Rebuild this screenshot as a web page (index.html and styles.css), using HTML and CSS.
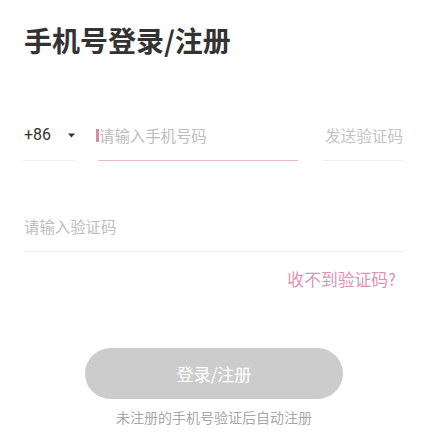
FILE: index.html
```html
<!DOCTYPE html>
<html lang="zh-CN">
<head>
<meta charset="utf-8">
<title>手机号登录/注册</title>
<link rel="stylesheet" href="styles.css">
</head>
<body>
<main class="page">
  <h1 class="title">手机号登录/注册</h1>

  <div class="phone-row">
    <div class="field country">
      <span class="code">+86</span>
      <svg class="caret" width="7" height="5" viewBox="0 0 7 5"><path d="M0 0.5 L7 0.5 L3.5 4.5 Z" fill="#333"/></svg>
    </div>
    <div class="field phone active">
      <span class="cursor"></span><span class="placeholder">请输入手机号码</span>
    </div>
    <div class="field send">发送验证码</div>
  </div>

  <div class="field code-field">
    <span class="placeholder">请输入验证码</span>
  </div>

  <div class="help-row">
    <span class="help">收不到验证码?</span>
  </div>

  <div class="btn-row">
    <button class="submit" type="button">登录/注册</button>
  </div>

  <p class="note">未注册的手机号验证后自动注册</p>
</main>
</body>
</html>
```

FILE: styles.css
```css
html, body {
  margin: 0;
  padding: 0;
  background: #ffffff;
}

body {
  font-family: "Noto Sans CJK SC", "Noto Sans", sans-serif;
  color: #333333;
}

.page {
  width: 432px;
  height: 444px;
  box-sizing: border-box;
  padding: 22px 28px 0 24px;
  display: flex;
  flex-direction: column;
}

.title {
  margin: 0;
  font-size: 28px;
  line-height: 36px;
  font-weight: 700;
  color: #333333;
  letter-spacing: 0;
}

.phone-row {
  margin-top: 65px;
  display: flex;
  align-items: flex-end;
}

.field {
  font-size: 15.4px;
  line-height: 24px;
  padding-bottom: 13px;
  border-bottom: 1px solid #eeeeee;
  display: flex;
  align-items: center;
}

.country {
  width: 52px;
  box-sizing: border-box;
  margin-left: -1px;
  padding-left: 1px;
}

.code {
  font-family: Roboto, "Noto Sans", sans-serif;
  font-size: 16px;
  color: #333333;
  width: 44px;
}

.caret {
  display: block;
}

.phone {
  width: 200px;
  margin-left: 23px;
  border-bottom-color: #ebb9ca;
}

.cursor {
  display: inline-block;
  width: 3px;
  height: 13px;
  background: #d98ba6;
  margin-left: -2px;
  margin-right: 0;
}

.placeholder {
  color: #bdbdbd;
}

.send {
  margin-left: 24px;
  width: 81px;
  box-sizing: border-box;
  padding-left: 3px;
  font-size: 15.6px;
  color: #c4c4c4;
}

.code-field {
  margin-top: 53px;
}

.help-row {
  margin-top: 15px;
  display: flex;
  justify-content: flex-end;
}

.help {
  font-size: 16.8px;
  line-height: 24px;
  color: #e391b3;
  margin-right: 8px;
}

.btn-row {
  margin-top: 57px;
  display: flex;
  justify-content: center;
}

.submit {
  width: 258px;
  height: 51px;
  border: 0;
  border-radius: 26px;
  background: #cccccc;
  color: #ffffff;
  font-family: "Noto Sans CJK SC", sans-serif;
  font-size: 17px;
  padding: 0;
}

.note {
  margin: 8px 0 0;
  text-align: center;
  font-size: 14px;
  line-height: 20px;
  color: #a8a8a8;
}
```
